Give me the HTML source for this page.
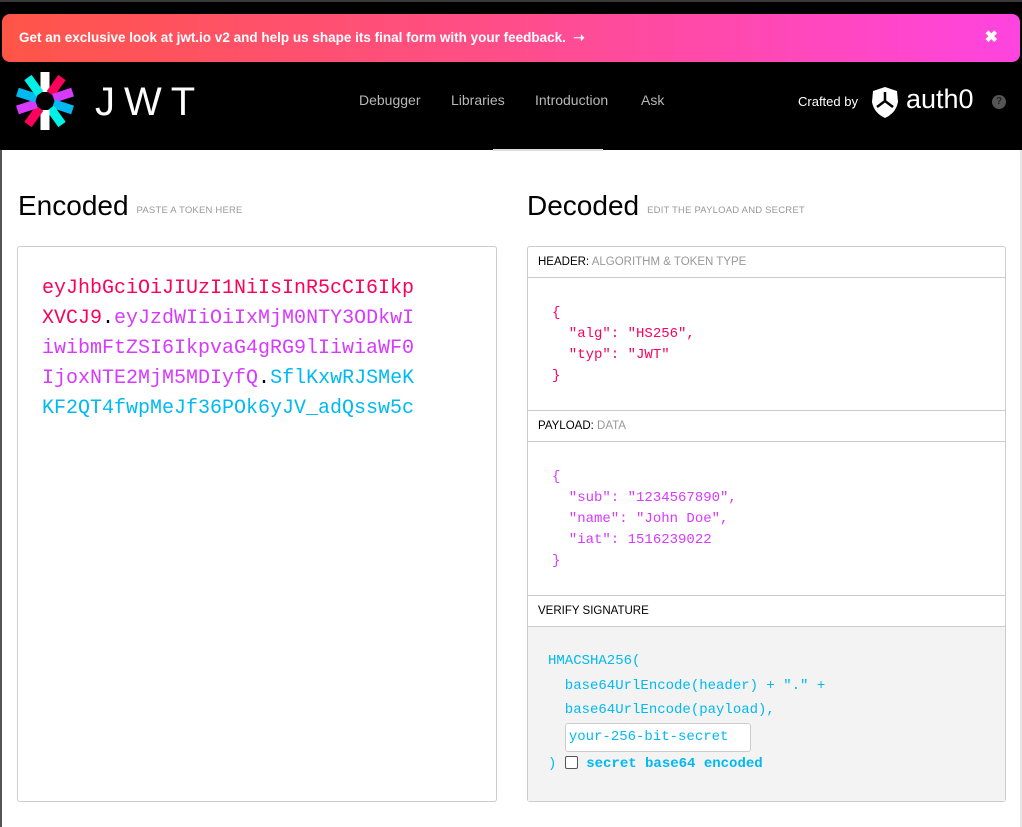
<!DOCTYPE html>
<html><head><meta charset="utf-8"><style>
*{margin:0;padding:0;box-sizing:border-box}
body{width:1022px;height:827px;background:#fff;font-family:"Liberation Sans",sans-serif;position:relative;overflow:hidden}
.top{position:absolute;left:0;top:0;width:1022px;height:150px;background:#000;border-top:2px solid #3a3a3a}
.banner{position:absolute;left:2px;top:14px;width:1018px;height:48px;border-radius:8px;background:linear-gradient(90deg,#ff5548,#ff4d8a 50%,#ff44e0);color:#fff;font-weight:bold;font-size:13.5px;line-height:48px;padding-left:17px}
.banner .x{position:absolute;right:22px;top:0;font-size:16px}
.nav{position:absolute;top:92px;font-size:14px;color:#b8b8b8}
.mono{font-family:"Liberation Mono",monospace}
h2{position:absolute;top:190px;font-weight:normal;font-size:28px;color:#000}
h2 small{font-size:9.5px;color:#999;margin-left:8px;letter-spacing:.2px;vertical-align:2px}
.box{position:absolute;top:246px;height:556px;border:1px solid #ccc;border-radius:3px}
.enc{left:17px;width:480px;padding:27px 24px;font-size:20px;line-height:30px}
.r{color:#fb015b}.p{color:#d63aff}.c{color:#00b9f1}
.dec{left:527px;width:479px}
.lbl{height:31px;border-bottom:1px solid #ccc;font-size:11.5px;line-height:31px;padding-left:10px;color:#000}
.lbl span{color:#999}
.js{font-size:14px;line-height:21px;white-space:pre;padding-left:24px}
</style></head><body>
<div class="top"></div>
<div class="banner">Get an exclusive look at jwt.io v2 and help us shape its final form with your feedback. &nbsp;➝<span class="x">✖</span></div>
<svg style="position:absolute;left:14px;top:70px" width="62" height="62" viewBox="-31 -31 62 62">
<g>
<rect x="-4.5" y="-29" width="9" height="20" fill="#fff"/>
<rect x="-4.5" y="-29" width="9" height="20" fill="#fb015b" transform="rotate(36)"/>
<rect x="-4.5" y="-29" width="9" height="20" fill="#d63aff" transform="rotate(72)"/>
<rect x="-4.5" y="-29" width="9" height="20" fill="#00b9f1" transform="rotate(108)"/>
<rect x="-4.5" y="-29" width="9" height="20" fill="#00f2e6" transform="rotate(144)"/>
<rect x="-4.5" y="-29" width="9" height="20" fill="#fff" transform="rotate(180)"/>
<rect x="-4.5" y="-29" width="9" height="20" fill="#fb015b" transform="rotate(216)"/>
<rect x="-4.5" y="-29" width="9" height="20" fill="#d63aff" transform="rotate(252)"/>
<rect x="-4.5" y="-29" width="9" height="20" fill="#00b9f1" transform="rotate(288)"/>
<rect x="-4.5" y="-29" width="9" height="20" fill="#00f2e6" transform="rotate(324)"/>
</g></svg>
<svg style="position:absolute;left:95px;top:82px" width="105" height="36"><text x="0" y="33" font-family="Liberation Sans" font-size="40" fill="#fff" letter-spacing="9">JWT</text></svg>
<div class="nav" style="left:359px">Debugger</div>
<div class="nav" style="left:451px">Libraries</div>
<div class="nav" style="left:535px">Introduction</div>
<div class="nav" style="left:641px">Ask</div>
<div class="nav" style="left:798px;top:94px;color:#fff;font-size:13px">Crafted by</div>
<svg style="position:absolute;left:871px;top:86px" width="28" height="33" viewBox="0 0 28 33"><path d="M14 1 L26 5 L27 16 Q25 27 14 32 Q3 27 1 16 L2 5 Z" fill="#fff"/><path d="M14 6 L14 15 L6 21 M14 15 L22 21" stroke="#000" stroke-width="2.5" fill="none"/></svg>
<div style="position:absolute;left:906px;top:84px;color:#fff;font-size:27px">auth0</div>
<div style="position:absolute;left:992px;top:95px;width:14px;height:14px;border-radius:50%;background:#555;color:#222;font-size:10px;font-weight:bold;text-align:center;line-height:14px">?</div>
<div style="position:absolute;left:493px;top:149px;width:110px;height:2px;background:#ddd"></div>

<h2 style="left:18px">Encoded<small>PASTE A TOKEN HERE</small></h2>
<h2 style="left:527px">Decoded<small>EDIT THE PAYLOAD AND SECRET</small></h2>

<div class="box enc mono"><span class="r">eyJhbGciOiJIUzI1NiIsInR5cCI6Ikp<br>XVCJ9</span>.<span class="p">eyJzdWIiOiIxMjM0NTY3ODkwI<br>iwibmFtZSI6IkpvaG4gRG9lIiwiaWF0<br>IjoxNTE2MjM5MDIyfQ</span>.<span class="c">SflKxwRJSMeK<br>KF2QT4fwpMeJf36POk6yJV_adQssw5c</span></div>

<div class="box dec">
<div class="lbl">HEADER: <span>ALGORITHM &amp; TOKEN TYPE</span></div>
<div class="js mono r" style="height:133px;border-bottom:1px solid #ccc;padding-top:25px">{
  "alg": "HS256",
  "typ": "JWT"
}</div>
<div class="lbl">PAYLOAD: <span>DATA</span></div>
<div class="js mono p" style="height:154px;border-bottom:1px solid #ccc;padding-top:25px">{
  "sub": "1234567890",
  "name": "John Doe",
  "iat": 1516239022
}</div>
<div class="lbl">VERIFY SIGNATURE</div>
<div class="mono c" style="background:#f3f3f3;height:174px;padding:22px 0 0 20px;font-size:14px;line-height:24.5px;white-space:pre">HMACSHA256(
  base64UrlEncode(header) + "." +
  base64UrlEncode(payload),
  <span style="display:inline-block;width:186px;height:29px;border:1px solid #ccc;border-radius:3px;background:#fff;vertical-align:middle;padding-left:3px;line-height:27px">your-256-bit-secret</span>
) <span style="display:inline-block;width:13px;height:13px;border:1px solid #555;border-radius:2px;background:#fff;vertical-align:-2px"></span> <b>secret base64 encoded</b></div>
</div>
<div style="position:absolute;left:1020px;top:150px;width:2px;height:677px;background:#e6e6e6"></div>
<div style="position:absolute;left:0;top:150px;width:2px;height:677px;background:#555"></div>
</body></html>
